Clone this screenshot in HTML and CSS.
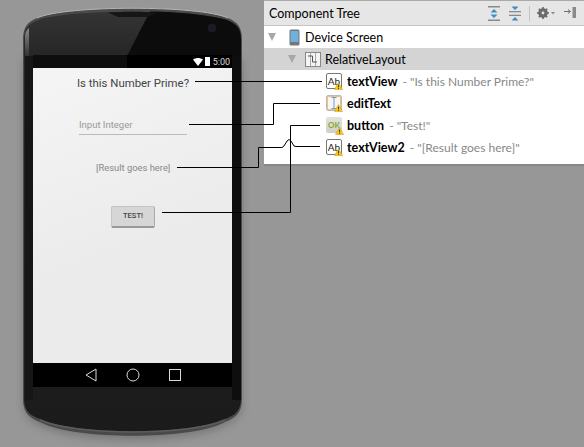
FILE: index.html
```html
<!DOCTYPE html>
<html lang="en">
<head>
    <meta charset="UTF-8">
    <title>Component Tree</title>
    <link rel="stylesheet" href="styles.css">
</head>
<body>
    <svg width="0" height="0" class="defs">
        <symbol id="warn" viewBox="0 0 9 8">
            <path d="M4.5 0.5 L8.6 7.5 H0.4 Z" fill="#f5c518" stroke="#c99a10" stroke-width="0.5"/>
            <rect x="4.1" y="2.6" width="0.9" height="2.8" fill="#333"/>
            <rect x="4.1" y="6" width="0.9" height="0.9" fill="#333"/>
        </symbol>
    </svg>

    <div class="stage">
        <div class="phone">
            <svg class="phone-body" width="236" height="447" viewBox="0 0 236 447">
                <defs>
                    <linearGradient id="bezel" x1="0" y1="0" x2="0" y2="1">
                        <stop offset="0" stop-color="#343434"/>
                        <stop offset="0.12" stop-color="#242424"/>
                        <stop offset="1" stop-color="#1b1b1b"/>
                    </linearGradient>
                    <linearGradient id="rim" x1="0" y1="0" x2="0" y2="1">
                        <stop offset="0" stop-color="#8a8a8a"/>
                        <stop offset="1" stop-color="#333"/>
                    </linearGradient>
                    <filter id="soft" x="-10%" y="-10%" width="120%" height="120%">
                        <feGaussianBlur stdDeviation="4"/>
                    </filter>
                </defs>
                <path d="M8 60 H227 V405 C227 418 215 424 205 428 C170 444 65 444 30 428 C20 424 8 418 8 405 Z" fill="#555" opacity="0.45" filter="url(#soft)"/>
                <path d="M8 40 C8 26 13 22 22 18 C50 5 185 5 213 18 C222 22 227 26 227 40 V398 C227 414 220 418 208 423 C175 440 60 440 27 423 C15 418 8 414 8 398 Z" fill="#4a4a4a"/>
                <path d="M9 40 C9 27 14 24 23 20 C51 9 184 9 212 20 C221 24 226 27 226 40 V398 C226 412 219 416 207 420 C174 435 61 435 28 420 C16 416 9 412 9 398 Z" fill="url(#bezel)"/>
                <path d="M22 18 C50 5 185 5 213 18" fill="none" stroke="#b5b5b5" stroke-width="1"/>
                <path d="M25 420 C60 436 175 436 210 420" fill="none" stroke="#5c5c5c" stroke-width="1.5"/>
                <path d="M135 11.5 C165 12 195 15 212 20 C221 24 226 27 226 40 V56 H112 Z" fill="#0c0c0c"/>
                <path d="M93 12.5 C110 11.5 125 11.5 142 12.5 L133 17 H103 Z" fill="#161616"/>
                <path d="M10 36 C10 32 12 30 14 28 V56 H10 Z" fill="url(#rim)"/>
                <path d="M10 56 H18 V400 H10 Z" fill="#161616"/>
                <path d="M217 56 H226 V400 H217 Z" fill="#0e0e0e"/>
                <circle cx="197" cy="28" r="4.5" fill="#1a1a22"/>
            </svg>
            <div class="screen">
                <div class="status-bar">
                    <svg class="wifi" width="10" height="8" viewBox="0 0 10 8"><path d="M0 1.5 C3 -0.5 7 -0.5 10 1.5 L5 8 Z" fill="#fff"/></svg>
                    <span class="battery"></span>
                    <span class="clock">5:00</span>
                </div>
                <div class="app-content">
                    <div class="prime-title">Is this Number Prime?</div>
                    <div class="input-integer">Input Integer</div>
                    <div class="result-text">[Result goes here]</div>
                    <div class="test-btn">TEST!</div>
                </div>
                <div class="nav-bar">
                    <svg width="12" height="14" viewBox="0 0 12 14"><path d="M11 1 V13 L1 7 Z" fill="none" stroke="#d8d8d8" stroke-width="1"/></svg>
                    <svg width="14" height="14" viewBox="0 0 14 14"><circle cx="7" cy="7" r="6" fill="none" stroke="#d8d8d8" stroke-width="1"/></svg>
                    <svg width="12" height="12" viewBox="0 0 12 12"><rect x="0.5" y="0.5" width="11" height="11" fill="none" stroke="#d8d8d8" stroke-width="1"/></svg>
                </div>
            </div>
        </div>

        <div class="tree-panel">
            <div class="tree-header">
                <span class="tree-title">Component Tree</span>
                <div class="tree-tools">
                    <svg width="14" height="15" viewBox="0 0 14 15">
                        <rect x="1" y="0" width="12" height="1.5" fill="#8a8a8a"/>
                        <rect x="1" y="13.5" width="12" height="1.5" fill="#8a8a8a"/>
                        <path d="M7 3 L10.5 6.5 H3.5 Z M3.5 8.5 H10.5 L7 12 Z" fill="#3c8fc0"/>
                    </svg>
                    <svg width="14" height="15" viewBox="0 0 14 15">
                        <rect x="1" y="5" width="12" height="1.3" fill="#8a8a8a"/>
                        <rect x="1" y="8.7" width="12" height="1.3" fill="#8a8a8a"/>
                        <path d="M7 4 L3.5 0.5 H10.5 Z M3.5 14.5 L7 11 L10.5 14.5 Z" fill="#3c8fc0"/>
                    </svg>
                    <span class="tool-sep"></span>
                    <svg width="18" height="12" viewBox="0 0 18 12">
                        <circle cx="6" cy="6" r="3.6" fill="none" stroke="#6a6a6a" stroke-width="2.4"/>
                        <path d="M6 0 V12 M0 6 H12 M1.8 1.8 L10.2 10.2 M10.2 1.8 L1.8 10.2" stroke="#6a6a6a" stroke-width="1.6"/>
                        <circle cx="6" cy="6" r="1.4" fill="#e6e6e6"/>
                        <path d="M14 5 H18 L16 7.5 Z" fill="#8a8a8a"/>
                    </svg>
                    <svg class="pin-icon" width="13" height="12" viewBox="0 0 13 12">
                        <path d="M0 4.5 H6 M4 2.5 L6.5 4.5 L4 6.5" fill="none" stroke="#707070" stroke-width="1"/>
                        <rect x="8.5" y="0" width="3.5" height="11" fill="#8a8a8a"/>
                    </svg>
                </div>
            </div>
            <div class="tree-row">
                <span class="arrow"></span>
                <svg class="device-icon" width="11" height="17" viewBox="0 0 11 17">
                    <rect x="0.5" y="0.5" width="10" height="16" rx="1.5" fill="#777"/>
                    <rect x="1.5" y="2" width="8" height="11" fill="#6fb0dd"/>
                </svg>
                <span class="row-name">Device Screen</span>
            </div>
            <div class="tree-row row-selected row-layout">
                <span class="arrow"></span>
                <svg class="layout-icon" width="16" height="15" viewBox="0 0 16 15">
                    <rect x="0.5" y="0.5" width="15" height="14" fill="#f4f4f4" stroke="#888"/>
                    <path d="M5.5 1 V14 M10.5 1 V14" stroke="#aaa"/>
                    <path d="M3 4 H7.5 V10 H12" fill="none" stroke="#555"/>
                </svg>
                <span class="row-name">RelativeLayout</span>
            </div>
            <div class="tree-row row-widget">
                <span class="widget-icon icon-text">Ab<svg class="warn-badge" width="9" height="8"><use href="#warn"/></svg></span>
                <b class="widget-id">textView</b><span class="widget-value">- "Is this Number Prime?"</span>
            </div>
            <div class="tree-row row-widget">
                <span class="widget-icon icon-edit">
                    <svg width="8" height="12" viewBox="0 0 8 12"><path d="M1.5 0.5 H6.5 M1.5 11.5 H6.5 M4 0.5 V11.5" stroke="#6f9fc4" fill="none"/></svg>
                    <svg class="warn-badge" width="9" height="8"><use href="#warn"/></svg>
                </span>
                <b class="widget-id">editText</b>
            </div>
            <div class="tree-row row-widget">
                <span class="widget-icon icon-ok">OK<svg class="warn-badge" width="9" height="8"><use href="#warn"/></svg></span>
                <b class="widget-id">button</b><span class="widget-value">- "Test!"</span>
            </div>
            <div class="tree-row row-widget">
                <span class="widget-icon icon-text">Ab<svg class="warn-badge" width="9" height="8"><use href="#warn"/></svg></span>
                <b class="widget-id">textView2</b><span class="widget-value">- "[Result goes here]"</span>
            </div>
        </div>

        <!-- connector lines run over both the phone and the panel -->
        <svg class="connectors" width="584" height="447" viewBox="0 0 584 447">
            <path d="M195 81.5 H322"/>
            <path d="M189 124.5 H273.5 V103.5 H320"/>
            <path d="M177 167.5 H258.5 V147.5 H282 L284 146 L287 141 L289 139.5 L291 141 L294 146 L296 146.5 H320"/>
            <path d="M162 212.5 H290.5 V125.5 H320"/>
        </svg>
    </div>
</body>
</html>
```

FILE: styles.css
```css
body {
    margin: 0;
    background-color: #979797;
    font-family: Lato, sans-serif;
    overflow: hidden;
}

.defs {
    display: block;
    height: 0;
}

.stage {
    position: relative;
    display: flex;
    justify-content: space-between;
    align-items: flex-start;
    width: 584px;
    height: 447px;
}

/* phone */
.phone {
    position: relative;
    width: 236px;
    height: 447px;
    margin-left: 15px;
}

.phone-body {
    position: absolute;
    left: 0;
    top: 0;
}

.screen {
    position: relative;
    display: flex;
    flex-direction: column;
    width: 199px;
    margin: 55px 0 0 18px;
}

.status-bar {
    display: flex;
    align-items: center;
    justify-content: flex-end;
    height: 13px;
    padding-right: 2px;
    background: linear-gradient(90deg, #0e0e0e 0, #0e0e0e 47%, #000 47%);
    color: #ddd;
    font-family: Roboto, sans-serif;
    font-size: 9px;
}

.wifi {
    margin-right: 2px;
}

.battery {
    width: 5px;
    height: 9px;
    margin-right: 3px;
    background-color: #fff;
}

.app-content {
    height: 295px;
    background: linear-gradient(160deg, #f5f5f5, #ebebeb 60%);
    font-family: Roboto, sans-serif;
}

.prime-title {
    margin: 7px 0 0 44px;
    color: #444;
    font-size: 11.4px;
    line-height: 16px;
}

.input-integer {
    width: 108px;
    margin: 27px 0 0 46px;
    padding-bottom: 3px;
    border-bottom: 1px solid #bbb;
    color: #999;
    font-size: 9.5px;
    line-height: 13px;
}

.result-text {
    margin: 26px 0 0 63px;
    color: #888;
    font-size: 9.4px;
    line-height: 13px;
}

.test-btn {
    box-sizing: border-box;
    width: 44px;
    height: 22px;
    margin: 32px 0 0 78px;
    border: 1px solid #c4c4c4;
    border-bottom: 2px solid #999;
    border-right-color: #aaa;
    border-radius: 2px;
    background-color: #d6d6d6;
    color: #444;
    font-size: 7.5px;
    font-weight: 500;
    line-height: 18px;
    text-align: center;
}

.nav-bar {
    display: flex;
    align-items: center;
    gap: 29px;
    height: 24px;
    padding-left: 52px;
    background-color: #000;
}

/* component tree panel */
.tree-panel {
    position: relative;
    width: 320px;
    height: 163px;
    border-top: 1px solid #aaa;
    border-bottom: 2px solid #888;
    background-color: #fff;
    font-size: 12.5px;
    color: #000;
}

.tree-header {
    display: flex;
    align-items: center;
    justify-content: space-between;
    box-sizing: border-box;
    height: 25px;
    padding: 0 7px 0 5px;
    border-bottom: 1px solid #c4c4c4;
    background-color: #e6e6e6;
}

.tree-tools {
    display: flex;
    align-items: center;
    gap: 7px;
}

.tool-sep {
    width: 1px;
    height: 15px;
    background-color: #c4c4c4;
}

.pin-icon {
    margin-left: 2px;
}

.tree-row {
    display: flex;
    align-items: center;
    height: 22px;
    white-space: nowrap;
}

.row-selected {
    background-color: #d4d4d4;
}

.arrow {
    width: 0;
    height: 0;
    margin-left: 4px;
    border-left: 4px solid transparent;
    border-right: 4px solid transparent;
    border-top: 8px solid #a8a8a8;
}

.device-icon {
    margin-left: 13px;
}

.row-name {
    margin-left: 5px;
}

.row-layout .arrow {
    margin-left: 24px;
}

.row-layout .layout-icon {
    margin-left: 9px;
}

.row-layout .row-name {
    margin-left: 4px;
}

.row-widget {
    padding-left: 62px;
}

.widget-icon {
    position: relative;
    display: flex;
    align-items: center;
    justify-content: center;
    box-sizing: border-box;
    width: 16px;
    height: 16px;
    margin-right: 5px;
    border-radius: 2px;
    line-height: 1;
}

.icon-text {
    border: 1px solid #777;
    background-color: #fff;
    color: #222;
    font-size: 10px;
}

.icon-edit {
    border: 1px solid #bbb;
    background-color: #f6f6f6;
    box-shadow: inset 0 0 0 1px #f0bd85;
}

.icon-ok {
    background: linear-gradient(#e4e4de, #cfcfc8);
    color: #8aa832;
    font-size: 8px;
    font-weight: 700;
}

.warn-badge {
    position: absolute;
    right: -2px;
    bottom: -2px;
}

.widget-id {
    font-weight: 700;
    color: #000;
}

.widget-value {
    margin-left: 5px;
    color: #888;
    font-size: 12px;
}

/* connectors */
.connectors {
    position: absolute;
    left: 0;
    top: 0;
    pointer-events: none;
}

.connectors path {
    fill: none;
    stroke: #000;
    stroke-width: 1;
}
```
